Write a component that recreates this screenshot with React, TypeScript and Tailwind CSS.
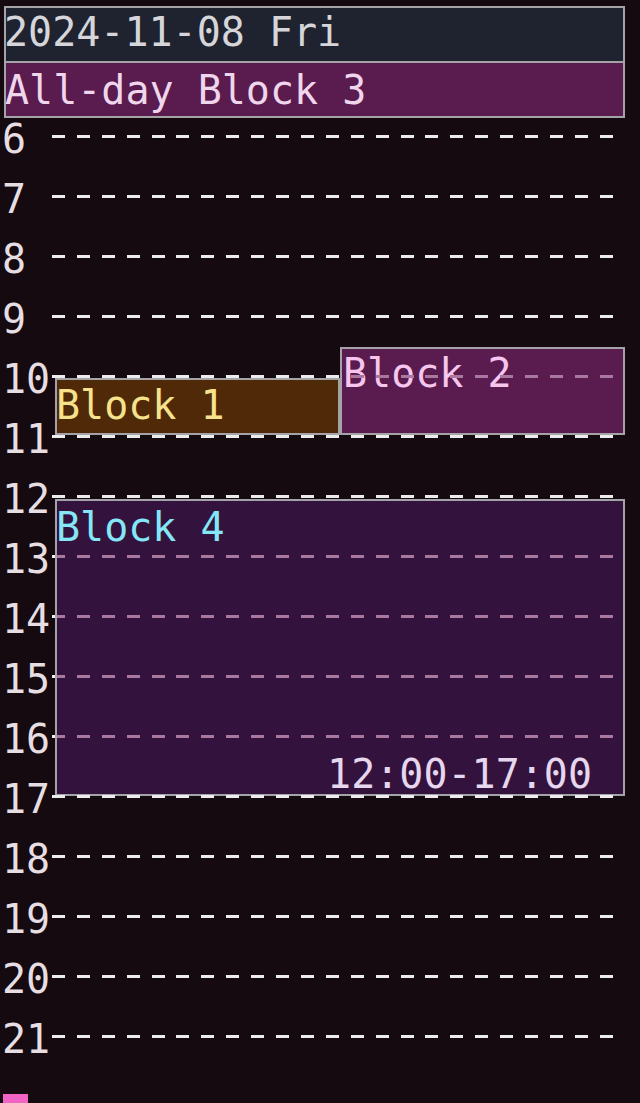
import React from "react";

const hours = [6, 7, 8, 9, 10, 11, 12, 13, 14, 15, 16, 17, 18, 19, 20, 21];

function dashWidth(h: number): number {
  if (h === 10) return 288;
  if (h >= 13 && h <= 16) return 3;
  return 561;
}

function InnerLine({ top, left, width }: { top: number; left: number; width: number }) {
  return (
    <div
      className="absolute h-[3px] bg-[repeating-linear-gradient(90deg,#a9789f_0px,#a9789f_13px,transparent_13px,transparent_24.9px)]"
      style={{ top, left, width }}
    />
  );
}

export default function App() {
  return (
    <div className="relative h-[1103px] w-full overflow-hidden bg-[#140a0f] font-['DejaVu_Sans_Mono','Liberation_Mono',monospace] text-[40px] leading-[36px]">
      <div className="pl-[4px] pt-[6px]">
        <div className="h-[57px] w-[621px] border-2 border-[#a4a4a8] bg-[#1f2330] pt-[6px] text-[#d6d6da] whitespace-nowrap">
          <span className="-ml-[2px]">2024-11-08 Fri</span>
        </div>
        <div className="h-[55px] w-[621px] border-2 border-t-0 border-[#a4a4a8] bg-[#5a1b4e] pt-[9px] text-[#efd6ec] whitespace-nowrap">
          <span className="-ml-[1px]">All-day Block 3</span>
        </div>
      </div>

      <div className="relative">
        {hours.map((h) => (
          <div key={h} className="flex h-[60px]">
            <div className="w-[52px] pl-[2px] pt-[3px] text-[#e6dee2] whitespace-nowrap">{h}</div>
            <div
              className="relative z-10 mt-[17px] h-[3px] bg-[repeating-linear-gradient(90deg,#ececec_0px,#ececec_13px,transparent_13px,transparent_24.9px)]"
              style={{ width: dashWidth(h) }}
            />
          </div>
        ))}

        {/* Block 1 */}
        <div className="absolute left-[55px] top-[260px] h-[57px] w-[285px] overflow-hidden border-2 border-[#a4a4a8] bg-[#502a08] pt-[7px] text-[#f6e28c] whitespace-nowrap">
          <span className="-ml-[1px]">Block 1</span>
        </div>

        {/* Block 2 */}
        <div className="absolute left-[340px] top-[229px] h-[88px] w-[285px] overflow-hidden border-2 border-[#a4a4a8] bg-[#5a1b4e] pt-[6px] text-[#f6c6ee] whitespace-nowrap">
          <span className="ml-[1px]">Block 2</span>
          <InnerLine top={26} left={-290} width={561} />
        </div>

        {/* Block 4 */}
        <div className="absolute left-[55px] top-[381px] flex h-[297px] w-[570px] flex-col justify-between overflow-hidden border-2 border-[#a4a4a8] bg-[#33133d] pb-[2px] pt-[8px] whitespace-nowrap">
          <span className="-ml-[1px] text-[#84e6f6]">Block 4</span>
          <span className="self-end pr-[31px] text-[#e6d6ee]">12:00-17:00</span>
          <InnerLine top={54} left={-5} width={561} />
          <InnerLine top={114} left={-5} width={561} />
          <InnerLine top={174} left={-5} width={561} />
          <InnerLine top={234} left={-5} width={561} />
        </div>

        <div className="ml-[3px] mt-[16px] h-[9px] w-[25px] bg-[#f264c4]" />
      </div>
    </div>
  );
}
